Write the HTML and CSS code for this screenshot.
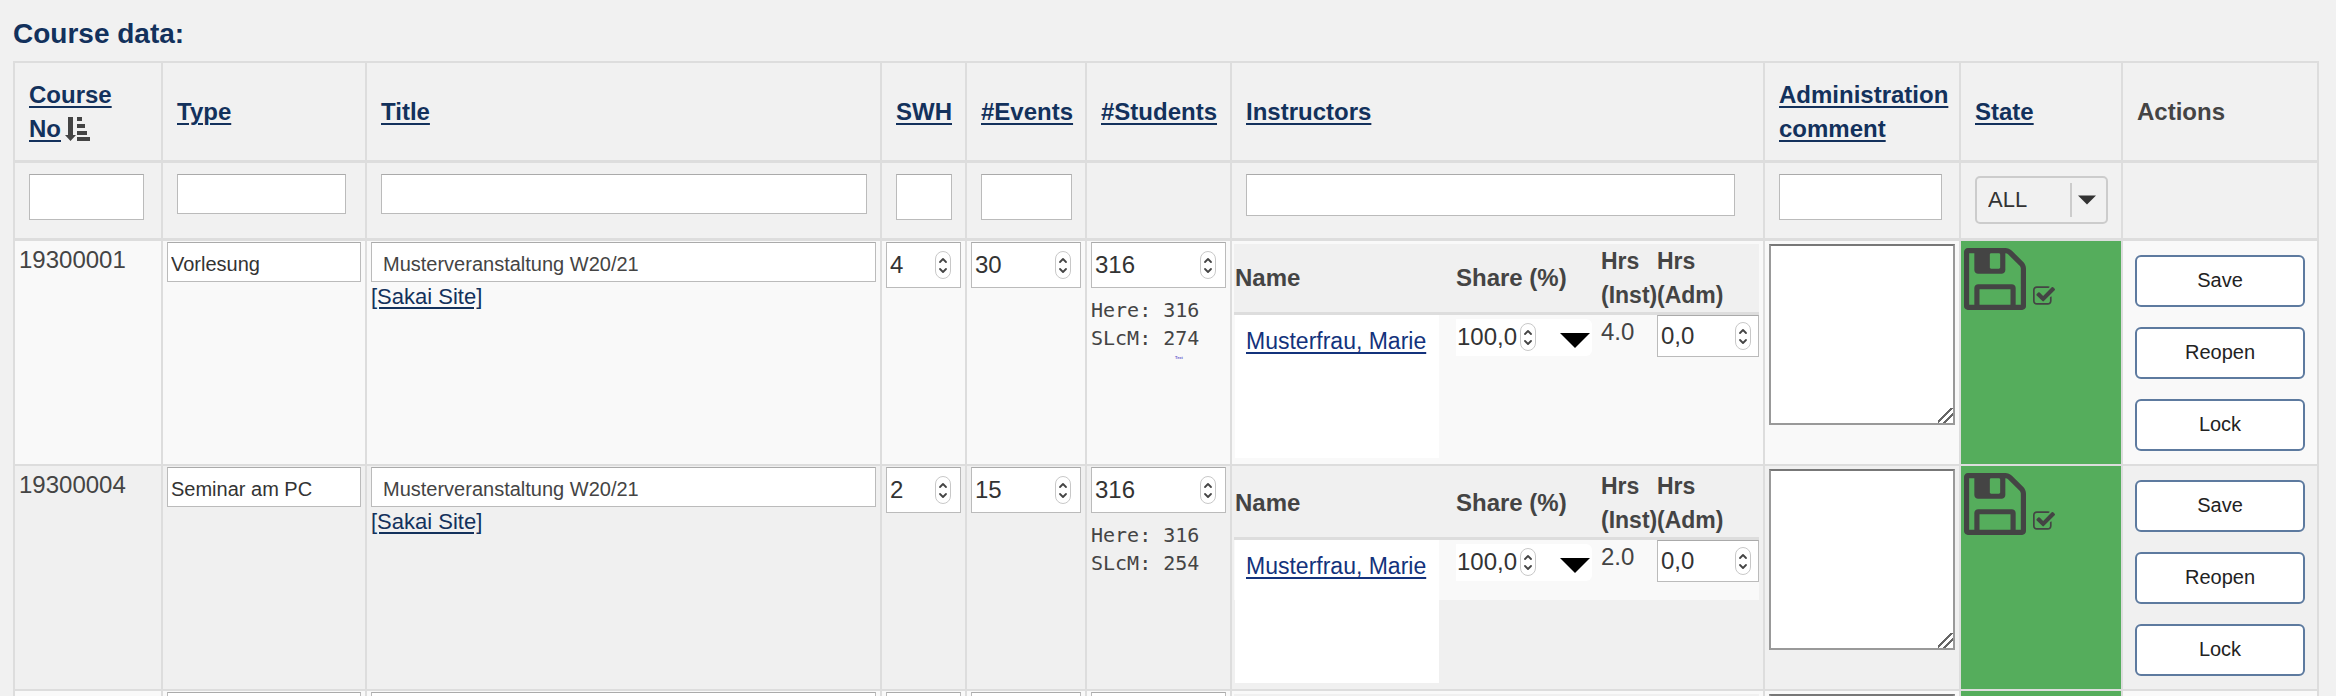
FILE: index.html
```html
<!DOCTYPE html>
<html lang="en">
<head>
    <meta charset="UTF-8">
    <meta name="viewport" content="width=device-width, initial-scale=1.0">
    <title>Course data</title>
    <link rel="stylesheet" href="styles.css">
</head>
<body>
    <!-- Shared icons -->
    <svg class="sprite" aria-hidden="true">
        <symbol id="icon-save" viewBox="128 128 1536 1536">
            <path d="M512 1536h768v-384h-768v384zm896 0h128v-896q0-14-10-38.5t-20-34.5l-281-281q-10-10-34-20t-39-10v416q0 40-28 68t-68 28h-576q-40 0-68-28t-28-68v-416h-128v1280h128v-416q0-40 28-68t68-28h832q40 0 68 28t28 68v416zm-384-928v-320q0-13-9.5-22.5t-22.5-9.5h-192q-13 0-22.5 9.5t-9.5 22.5v320q0 13 9.5 22.5t22.5 9.5h192q13 0 22.5-9.5t9.5-22.5zm640 32v928q0 40-28 68t-68 28h-1344q-40 0-68-28t-28-68v-1344q0-40 28-68t68-28h928q40 0 88 20t76 48l280 280q28 28 48 76t20 88z"/>
        </symbol>
        <symbol id="icon-check" viewBox="64 128 1664 1408">
            <path d="M1472 930v318q0 119-84.5 203.5t-203.5 84.5h-832q-119 0-203.5-84.5t-84.5-203.5v-832q0-119 84.5-203.5t203.5-84.5h832q63 0 117 25 15 7 18 23 3 17-9 29l-49 49q-10 10-23 10-3 0-9-2-23-6-45-6h-832q-66 0-113 47t-47 113v832q0 66 47 113t113 47h832q66 0 113-47t47-113v-254q0-13 9-22l64-64q10-10 23-10 6 0 12 3 20 8 20 29zm231-489l-814 814q-24 24-57 24t-57-24l-430-430q-24-24-24-57t24-57l110-110q24-24 57-24t57 24l263 263 647-647q24-24 57-24t57 24l110 110q24 24 24 57t-24 57z"/>
        </symbol>
        <symbol id="icon-stepper" viewBox="0 0 16 28">
            <rect x="0.5" y="0.5" width="15" height="27" rx="7.5" fill="#fff" stroke="#c8c8c8"/>
            <path d="M5 11l3-3 3 3M5 18l3 3 3-3" fill="none" stroke="#444" stroke-width="1.8" stroke-linecap="round" stroke-linejoin="round"/>
        </symbol>
        <symbol id="icon-caret" viewBox="0 0 30 15">
            <path d="M0 0h30L15 15z"/>
        </symbol>
    </svg>

    <h2 class="heading">Course data:</h2>

    <table class="courses">
        <colgroup>
            <col class="col-no">
            <col class="col-type">
            <col class="col-title">
            <col class="col-swh">
            <col class="col-events">
            <col class="col-students">
            <col class="col-instructors">
            <col class="col-comment">
            <col class="col-state">
            <col class="col-actions">
        </colgroup>
        <thead>
            <tr class="head-row">
                <th><a href="#">Course<br>No</a><svg class="sort-icon" viewBox="0 0 25 24" aria-hidden="true"><path d="M3 0h5v18h3l-5.500 6L0 18h3zM12 0h5v4h-5zM12 7h8v4h-8zM12 14h10v4h-10zM12 20h13v4h-13z"/></svg></th>
                <th><a href="#">Type</a></th>
                <th><a href="#">Title</a></th>
                <th><a href="#">SWH</a></th>
                <th><a href="#">#Events</a></th>
                <th><a href="#">#Students</a></th>
                <th><a href="#">Instructors</a></th>
                <th><a href="#">Administration comment</a></th>
                <th><a href="#">State</a></th>
                <th>Actions</th>
            </tr>
            <tr class="filter-row">
                <td><input class="field filter-no" type="text" aria-label="Filter course no"></td>
                <td><input class="field filter-type short" type="text" aria-label="Filter type"></td>
                <td><input class="field short" type="text" aria-label="Filter title"></td>
                <td><input class="field" type="text" aria-label="Filter SWH"></td>
                <td><input class="field" type="text" aria-label="Filter events"></td>
                <td></td>
                <td><input class="field filter-instructors" type="text" aria-label="Filter instructors"></td>
                <td><input class="field filter-comment" type="text" aria-label="Filter administration comment"></td>
                <td>
                    <span class="select-wrap">
                        <select class="state-select" aria-label="Filter state">
                            <option>ALL</option>
                        </select>
                        <svg class="select-arrow" aria-hidden="true"><use href="#icon-caret"/></svg>
                    </span>
                </td>
                <td></td>
            </tr>
        </thead>
        <tbody>
            <tr>
                <td class="course-no">19300001</td>
                <td><input class="field short" type="text" value="Vorlesung" aria-label="Type"></td>
                <td>
                    <input class="field short title" type="text" value="Musterveranstaltung W20/21" aria-label="Title">
                    <a class="site-link" href="#">[Sakai Site]</a>
                </td>
                <td><span class="number"><input type="text" value="4" aria-label="SWH"><svg class="stepper"><use href="#icon-stepper"/></svg></span></td>
                <td><span class="number"><input type="text" value="30" aria-label="Events"><svg class="stepper"><use href="#icon-stepper"/></svg></span></td>
                <td>
                    <span class="number"><input type="text" value="316" aria-label="Students"><svg class="stepper"><use href="#icon-stepper"/></svg></span>
                    <pre class="counts">Here: 316
SLcM: 274</pre>
                    <span class="tiny-note">Text</span>
                </td>
                <td class="instructors-cell">
                    <table class="instructors">
                        <thead>
                            <tr>
                                <th class="name">Name</th>
                                <th class="share">Share (%)</th>
                                <th class="inst">Hrs (Inst)</th>
                                <th class="adm">Hrs (Adm)</th>
                            </tr>
                        </thead>
                        <tbody>
                            <tr>
                                <td><div class="name-box"><a href="#">Musterfrau, Marie</a></div></td>
                                <td><span class="share-box"><input type="text" value="100,0" aria-label="Share"><svg class="stepper"><use href="#icon-stepper"/></svg><svg class="share-arrow"><use href="#icon-caret"/></svg></span></td>
                                <td>4.0</td>
                                <td><span class="number small"><input type="text" value="0,0" aria-label="Hours adm"><svg class="stepper"><use href="#icon-stepper"/></svg></span></td>
                            </tr>
                        </tbody>
                    </table>
                </td>
                <td><textarea class="comment" aria-label="Administration comment"></textarea></td>
                <td class="state"><svg class="save-icon"><use href="#icon-save"/></svg><svg class="check-icon"><use href="#icon-check"/></svg></td>
                <td class="actions">
                    <div class="buttons">
                        <button type="button">Save</button>
                        <button type="button">Reopen</button>
                        <button type="button">Lock</button>
                    </div>
                </td>
            </tr>
            <tr>
                <td class="course-no">19300004</td>
                <td><input class="field short" type="text" value="Seminar am PC" aria-label="Type"></td>
                <td>
                    <input class="field short title" type="text" value="Musterveranstaltung W20/21" aria-label="Title">
                    <a class="site-link" href="#">[Sakai Site]</a>
                </td>
                <td><span class="number"><input type="text" value="2" aria-label="SWH"><svg class="stepper"><use href="#icon-stepper"/></svg></span></td>
                <td><span class="number"><input type="text" value="15" aria-label="Events"><svg class="stepper"><use href="#icon-stepper"/></svg></span></td>
                <td>
                    <span class="number"><input type="text" value="316" aria-label="Students"><svg class="stepper"><use href="#icon-stepper"/></svg></span>
                    <pre class="counts">Here: 316
SLcM: 254</pre>
                </td>
                <td class="instructors-cell">
                    <table class="instructors">
                        <thead>
                            <tr>
                                <th class="name">Name</th>
                                <th class="share">Share (%)</th>
                                <th class="inst">Hrs (Inst)</th>
                                <th class="adm">Hrs (Adm)</th>
                            </tr>
                        </thead>
                        <tbody>
                            <tr>
                                <td><div class="name-box"><a href="#">Musterfrau, Marie</a></div></td>
                                <td><span class="share-box"><input type="text" value="100,0" aria-label="Share"><svg class="stepper"><use href="#icon-stepper"/></svg><svg class="share-arrow"><use href="#icon-caret"/></svg></span></td>
                                <td>2.0</td>
                                <td><span class="number small"><input type="text" value="0,0" aria-label="Hours adm"><svg class="stepper"><use href="#icon-stepper"/></svg></span></td>
                            </tr>
                        </tbody>
                    </table>
                </td>
                <td><textarea class="comment" aria-label="Administration comment"></textarea></td>
                <td class="state"><svg class="save-icon"><use href="#icon-save"/></svg><svg class="check-icon"><use href="#icon-check"/></svg></td>
                <td class="actions">
                    <div class="buttons">
                        <button type="button">Save</button>
                        <button type="button">Reopen</button>
                        <button type="button">Lock</button>
                    </div>
                </td>
            </tr>
            <tr>
                <td></td>
                <td><input class="field short" type="text" aria-label="Type"></td>
                <td><input class="field short title" type="text" aria-label="Title"></td>
                <td><input class="field" type="text" aria-label="SWH"></td>
                <td><input class="field" type="text" aria-label="Events"></td>
                <td><input class="field" type="text" aria-label="Students"></td>
                <td class="instructors-cell">
                    <table class="instructors">
                        <thead>
                            <tr><th></th></tr>
                        </thead>
                    </table>
                </td>
                <td><textarea class="comment" aria-label="Administration comment"></textarea></td>
                <td class="state"></td>
                <td></td>
            </tr>
        </tbody>
    </table>
</body>
</html>
```
FILE: styles.css
```css
* {
    box-sizing: border-box;
}

body {
    margin: 0;
    padding: 17px 17px 0 13px;
    height: 100vh;
    overflow: hidden;
    font-family: "Liberation Sans", Arial, sans-serif;
    font-size: 24px;
    line-height: 34px;
    color: #444;
    background-color: #f1f1f1;
}

a {
    color: #13315c;
    text-underline-offset: 3px;
    text-decoration-thickness: 2px;
}

input,
select,
textarea,
button {
    font-family: inherit;
    color: #333;
}

.sprite {
    display: none;
}

.heading {
    margin: 0 0 10px;
    font-size: 28px;
    color: #13315c;
}

/* Main table */
.courses {
    width: 100%;
    table-layout: fixed;
    border-collapse: collapse;
}

.col-no { width: 148px; }
.col-type { width: 204px; }
.col-swh { width: 85px; }
.col-events { width: 120px; }
.col-students { width: 145px; }
.col-instructors { width: 533px; }
.col-comment { width: 196px; }
.col-state { width: 162px; }
.col-actions { width: 196px; }

.courses > * > tr > th,
.courses > * > tr > td {
    border: 2px solid #ddd;
    text-align: left;
}

.courses > tbody > tr > td {
    padding: 1px 4px;
    vertical-align: top;
}

.courses > tbody > tr:nth-child(odd) {
    background-color: #f9f9f9;
}

.courses > tbody > tr:nth-child(even) {
    background-color: #f0f0f0;
}

.courses > thead > .head-row > th {
    height: 99px;
    padding: 2px 4px 0 14px;
    border-bottom-width: 3px;
}

.courses > thead > .filter-row > td {
    height: 78px;
    padding: 11px 13px 0 14px;
    border-bottom-width: 3px;
    vertical-align: top;
}

.sort-icon {
    width: 25px;
    height: 24px;
    margin-left: 4px;
    vertical-align: -4px;
    fill: #444;
}

/* Fields */
.field {
    display: block;
    width: 100%;
    height: 46px;
    padding: 5px 3px 0;
    font-size: 20px;
    background-color: #fff;
    border: 1px solid #bbb;
    border-top-color: #aaa;
    border-radius: 0;
}

.field.short {
    height: 40px;
}

.field.title {
    padding-left: 11px;
    color: #444;
}

.filter-no { width: 115px; }
.filter-type { width: 169px; }
.filter-comment { width: 163px; }

.filter-instructors {
    width: 489px;
    height: 42px;
}

.select-wrap {
    position: relative;
    display: block;
    margin-top: 2px;
}

.state-select {
    display: block;
    width: 100%;
    height: 48px;
    padding: 0 11px;
    appearance: none;
    font-size: 22px;
    background: linear-gradient(#ccc, #ccc) right 34px center / 2px 34px no-repeat;
    border: 2px solid #ccc;
    border-radius: 5px;
}

.select-arrow {
    position: absolute;
    right: 12px;
    top: 19px;
    width: 18px;
    height: 10px;
    fill: #333;
    pointer-events: none;
}

.number {
    display: flex;
    align-items: center;
    height: 46px;
    padding: 0 9px 0 3px;
    background-color: #fff;
    border: 1px solid #bbb;
    border-top-color: #aaa;
}

.number.small {
    height: 42px;
    padding-right: 7px;
}

.number input,
.share-box input {
    flex: 1;
    min-width: 0;
    padding: 0;
    font-size: 24px;
    background: none;
    border: 0;
}

.stepper {
    flex: none;
    width: 16px;
    height: 28px;
}

/* Course rows */
.course-no {
    line-height: 36px;
}

.site-link {
    display: block;
    width: max-content;
    font-size: 22px;
    line-height: 30px;
}

.counts {
    margin: 8px 0 0;
    font-family: "DejaVu Sans Mono", monospace;
    font-size: 20px;
    line-height: 28px;
}

.tiny-note {
    display: block;
    margin-top: 4px;
    padding-left: 84px;
    font-size: 4px;
    font-weight: bold;
    line-height: 4px;
    color: #6a5acd;
}

.courses > tbody > tr > .instructors-cell {
    padding-left: 2px;
}

.instructors {
    width: 100%;
    margin-top: 2px;
    table-layout: fixed;
    border-collapse: collapse;
}

.instructors th {
    height: 69px;
    padding: 0;
    text-align: left;
    vertical-align: middle;
    background-color: #f0f0f0;
    border-bottom: 3px solid #ddd;
}

.instructors td {
    height: 60px;
    padding: 0;
    vertical-align: top;
    background-color: #f9f9f9;
}

.instructors .share { width: 145px; }
.instructors .inst { width: 56px; }
.instructors .adm { width: 102px; }

.instructors .inst,
.instructors .adm {
    font-size: 23px;
}

.instructors .name {
    padding-left: 1px;
}

/* The name panel reaches below its row */
.name-box {
    width: 204px;
    height: 143px;
    margin: 0 0 -83px 1px;
    padding: 9px 11px;
    font-size: 23px;
    background-color: #fff;
}

.name-box a {
    color: #13327c;
    white-space: nowrap;
}

.share-box {
    display: flex;
    align-items: center;
    width: 136px;
    height: 37px;
    margin-top: 4px;
    padding: 0 2px 0 1px;
    background-color: #fff;
    border-radius: 0 6px 6px 0;
}

.share-arrow {
    width: 30px;
    height: 15px;
    margin: 6px 0 0 24px;
    fill: #000;
}

.comment {
    display: block;
    width: 100%;
    height: 181px;
    margin-top: 2px;
    font-size: 20px;
    background-color: #fff;
    border: 2px solid #999;
    border-top-color: #777;
    border-radius: 0;
    resize: both;
}

.comment::-webkit-resizer {
    background: linear-gradient(135deg, transparent 9px, #666 9px, #666 11px, transparent 11px, transparent 14px, #666 14px, #666 16px, transparent 16px);
}

.courses > tbody > tr > .state {
    padding-top: 7px;
    padding-left: 3px;
    background-color: #55ad5c;
}

.save-icon {
    width: 62px;
    height: 62px;
    fill: #444;
    vertical-align: top;
}

.check-icon {
    width: 22px;
    height: 19px;
    margin: 38px 0 0 7px;
    fill: #444;
    vertical-align: top;
}

.courses > tbody > tr > .actions {
    padding: 14px 12px 13px;
}

.buttons {
    display: flex;
    flex-direction: column;
    gap: 20px;
}

.buttons button {
    height: 52px;
    font-size: 20px;
    color: #222;
    background-color: #fff;
    border: 2px solid #5d7a9f;
    border-radius: 6px;
}
```
